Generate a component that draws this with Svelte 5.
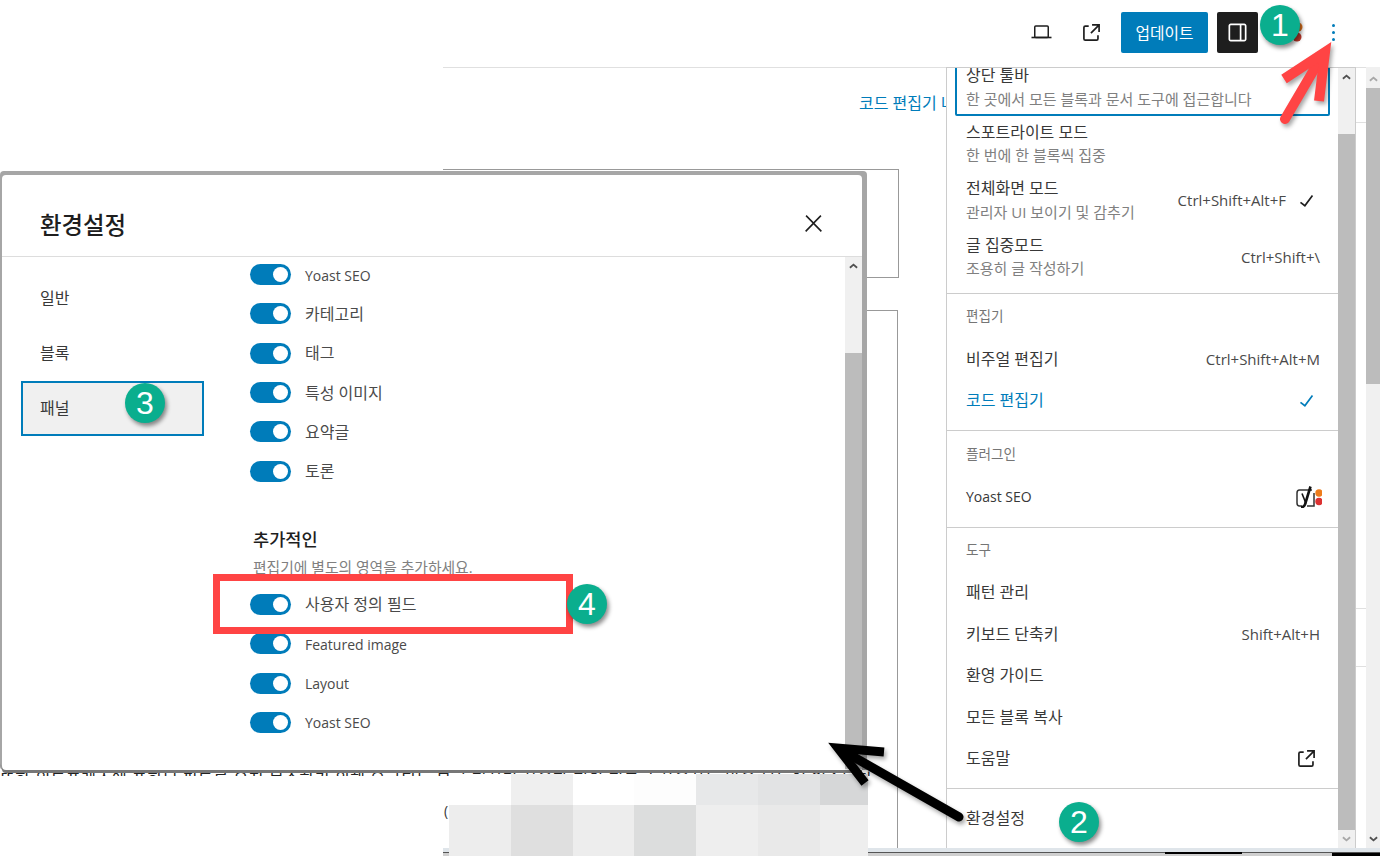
<script>
  const icons = {
    external: 'M19.5 4.5h-7V6h4.44l-5.97 5.97 1.06 1.06L18 7.06v4.44h1.5v-7Zm-13 1a2 2 0 0 0-2 2v10a2 2 0 0 0 2 2h10a2 2 0 0 0 2-2v-3H17v3a.5.5 0 0 1-.5.5h-10a.5.5 0 0 1-.5-.5v-10a.5.5 0 0 1 .5-.5h3V5.5h-3Z',
    sidebar: 'M18 4H6c-1.1 0-2 .9-2 2v12c0 1.1.9 2 2 2h12c1.1 0 2-.9 2-2V6c0-1.1-.9-2-2-2zm-4 14.5H6c-.3 0-.5-.2-.5-.5V6c0-.3.2-.5.5-.5h8v13zm4.5-.5c0 .3-.2.5-.5.5h-2.5v-13H18c.3 0 .5.2.5.5v12z',
    check: 'M16.7 7.1l-6.3 8.5-3.3-2.5-.9 1.2 4.5 3.4L17.9 8z',
    close: 'M13 11.8l6.1-6.3-1-1-6.1 6.2-6.1-6.2-1 1 6.1 6.3-6.5 6.7 1 1 6.5-6.6 6.5 6.6 1-1z'
  };

  const viewItems = [
    { label: '상단 툴바', desc: '한 곳에서 모든 블록과 문서 도구에 접근합니다', focused: true },
    { label: '스포트라이트 모드', desc: '한 번에 한 블록씩 집중' },
    { label: '전체화면 모드', desc: '관리자 UI 보이기 및 감추기', shortcut: 'Ctrl+Shift+Alt+F', check: true },
    { label: '글 집중모드', desc: '조용히 글 작성하기', shortcut: 'Ctrl+Shift+\\' }
  ];
  const toolItems = [
    { label: '패턴 관리' },
    { label: '키보드 단축키', shortcut: 'Shift+Alt+H' },
    { label: '환영 가이드' },
    { label: '모든 블록 복사' },
    { label: '도움말', external: true }
  ];

  const navItems = ['일반', '블록', '패널'];
  const panelsTop = ['Yoast SEO', '카테고리', '태그', '특성 이미지', '요약글', '토론'];
  const panelsExtra = ['사용자 정의 필드', 'Featured image', 'Layout', 'Yoast SEO'];

  // latin labels run smaller than hangul ones in the original font
  const isLatin = (s) => /^[\x00-\x7f]+$/.test(s);

  // blurred patch over the article text, left to right
  const mosaic = [
    '#ffffff', '#efefef', '#ffffff', '#fdfdfd', '#e7e8e9', '#e2e3e4', '#d6d7d8',
    '#ededed', '#dfdfdf', '#ededed', '#dcdddd', '#eeeeee', '#e9e9e9', '#eeeeee'
  ];

  const badges = [
    { n: 1, x: 1280, y: 25 },
    { n: 2, x: 1079, y: 822 },
    { n: 3, x: 145, y: 403 },
    { n: 4, x: 587, y: 604 }
  ];
</script>

{#snippet icon(d, cls = '')}
  <svg class="icon {cls}" viewBox="0 0 24 24" aria-hidden="true"><path d={d} /></svg>
{/snippet}

{#snippet scrollArrow(up)}
  <svg class="sb-arrow" viewBox="0 0 10 6" aria-hidden="true">
    <polyline points={up ? '1,5 5,1.5 9,5' : '1,1 5,4.5 9,1'} />
  </svg>
{/snippet}

{#snippet yoast()}
  <svg class="yoast" viewBox="0 0 26 22" aria-hidden="true">
    <path class="yoast-box" d="M16 4H3.5Q1 4 1 7v10q0 3 2.5 3H6M11 20h7V7" />
    <path class="yoast-y" d="M6 7.5l4 10" />
    <path class="yoast-y bold" d="M14.5 0.5l-5.5 18q-1 2.500-4 3" />
    <circle cx="23" cy="7" r="3.7" fill="#ee7c1b" />
    <circle cx="23" cy="15.500" r="3.7" fill="#dc3232" />
  </svg>
{/snippet}

{#snippet menuItem(item)}
  <div class="menu-item" class:focused={item.focused} class:active={item.active}>
    <div class="item-text">
      <div class="item-label" class:latin={isLatin(item.label)}>{item.label}</div>
      {#if item.desc}<div class="item-desc">{item.desc}</div>{/if}
    </div>
    {#if item.shortcut}<span class="shortcut">{item.shortcut}</span>{/if}
    {#if item.check}{@render icon(icons.check)}{/if}
    {#if item.external}{@render icon(icons.external)}{/if}
  </div>
{/snippet}

{#snippet toggleRow(label)}
  <div class="toggle-row">
    <span class="toggle"><span class="knob"></span></span>
    <span class="row-label" class:latin={isLatin(label)}>{label}</span>
  </div>
{/snippet}

<div class="page">
  <header class="toolbar">
    <button class="tool">
      <svg class="icon" viewBox="0 0 27 27" aria-hidden="true">
        <rect class="laptop" x="6.750" y="7" width="13.500" height="11.500" rx="1" />
        <rect x="3.500" y="17.700" width="20" height="1.600" />
      </svg>
    </button>
    <button class="tool">{@render icon(icons.external)}</button>
    <button class="update">업데이트</button>
    <button class="tool dark">{@render icon(icons.sidebar)}</button>
    <button class="tool yoast-tool">
      <svg class="yoast-dots" viewBox="0 0 10 20" aria-hidden="true">
        <circle cx="5" cy="5" r="4.500" fill="#e0731c" />
        <circle cx="4" cy="15" r="4.500" fill="#c0392b" />
      </svg>
    </button>
    <button class="kebab" aria-label="옵션"><i></i><i></i><i></i></button>
  </header>

  <div class="workspace">
    <div class="gutter"></div>
    <main class="editor">
      <div class="code-bar"><a href="#top">코드 편집기 나가기</a></div>
      <div class="code-box first"></div>
      <div class="code-box second">
        <p class="article-next">(</p>
      </div>
    </main>
    <aside class="side-strip"><i style="top: 54px"></i><i style="top: 540px"></i><i style="top: 598px"></i></aside>
    <div class="scrollbar page-sb">
      {@render scrollArrow(true)}
      <div class="thumb"></div>
      <div class="sb-fill"></div>
      {@render scrollArrow(false)}
    </div>
  </div>
  <div class="statusbar"></div>

  <!-- only the tops of this line show between the modal and the white patch -->
  <div class="article-peek">
    <p>또한 워드프레스에 포함된 필드를 유지 보수하기 위해 요구되는 블록 편집기 사용자 정의 필드를 사용하는 많은 분들이 있습니다</p>
  </div>

  <div class="menu">
    <div class="menu-scroll">
      <section class="menu-group first-group">
        {#each viewItems as item}{@render menuItem(item)}{/each}
      </section>
      <section class="menu-group">
        <h3>편집기</h3>
        {@render menuItem({ label: '비주얼 편집기', shortcut: 'Ctrl+Shift+Alt+M' })}
        {@render menuItem({ label: '코드 편집기', check: true, active: true })}
      </section>
      <section class="menu-group plugin-group">
        <h3>플러그인</h3>
        <div class="menu-item">
          <div class="item-text"><div class="item-label latin">Yoast SEO</div></div>
          {@render yoast()}
        </div>
      </section>
      <section class="menu-group">
        <h3>도구</h3>
        {#each toolItems as item}{@render menuItem(item)}{/each}
      </section>
      <section class="menu-group">
        {@render menuItem({ label: '환경설정' })}
      </section>
    </div>
    <div class="scrollbar menu-sb">
      {@render scrollArrow(true)}
      <div class="thumb"></div>
      {@render scrollArrow(false)}
    </div>
  </div>

  <div class="modal" role="dialog" aria-label="환경설정">
    <div class="modal-head">
      <h1>환경설정</h1>
      {@render icon(icons.close, 'close')}
    </div>
    <div class="modal-body">
      <nav class="modal-nav">
        {#each navItems as item, i}
          <div class="nav-item" class:selected={i === 2}>{item}</div>
        {/each}
      </nav>
      <div class="modal-content">
        <div class="panel-list">
          {#each panelsTop as label}{@render toggleRow(label)}{/each}
        </div>
        <h2>추가적인</h2>
        <p class="section-desc">편집기에 별도의 영역을 추가하세요.</p>
        <div class="panel-list">
          {#each panelsExtra as label}{@render toggleRow(label)}{/each}
        </div>
      </div>
      <div class="scrollbar modal-sb">
        {@render scrollArrow(true)}
        <div class="thumb"></div>
      </div>
    </div>
  </div>

  <div class="mosaic">
    {#each mosaic as color}<span style="background: {color}"></span>{/each}
  </div>

  <!-- screenshot annotations -->
  <div class="highlight"></div>

  <svg class="arrows" viewBox="0 0 1380 856" aria-hidden="true">
    <g class="arrow red">
      <path d="M1285 119L1322 56" />
      <path class="head" d="M1284 79L1325 52L1319 101" />
    </g>
    <g class="arrow black">
      <path d="M959 817L845 752" />
      <path class="head" d="M884 752L838 748L865 783" />
    </g>
  </svg>

  {#each badges as b}
    <span class="badge" style="left: {b.x - 20}px; top: {b.y - 20}px">{b.n}</span>
  {/each}
</div>

<style>
  :global(body) {
    margin: 0;
    background: #fff;
  }

  .page {
    position: relative;
    display: flex;
    flex-direction: column;
    width: 1380px;
    height: 856px;
    overflow: hidden;
    background: #fff;
    color: #383838;
    font-family: "Open Sans", "Noto Sans CJK KR", sans-serif;
    font-size: 16px;
  }

  .latin {
    font-size: 14px;
  }

  button {
    padding: 0;
    border: 0;
    background: none;
    font: inherit;
    color: inherit;
  }

  .icon {
    display: block;
    flex: none;
    width: 27px;
    height: 27px;
    fill: #1e1e1e;
  }

  /* Top toolbar */

  .toolbar {
    display: flex;
    flex: none;
    align-items: center;
    justify-content: flex-end;
    gap: 9px;
    height: 67px;
    padding: 0 31px 2px 0;
    box-sizing: border-box;
  }

  .tool {
    display: flex;
    align-items: center;
    justify-content: center;
    width: 41px;
    height: 41px;
    border-radius: 2px;
  }

  .tool.dark {
    background: #1e1e1e;
  }

  .tool.dark .icon {
    fill: #fff;
  }

  .laptop {
    fill: none;
    stroke: #1e1e1e;
    stroke-width: 1.5;
  }

  .update {
    width: 87px;
    height: 41px;
    border-radius: 2px;
    background: #007cba;
    color: #fff;
    font-size: 15.8px;
  }

  .yoast-tool {
    justify-content: flex-end;
    padding: 0 5px 2px 0;
    box-sizing: border-box;
  }

  .yoast-dots {
    width: 10px;
    height: 20px;
  }

  .kebab {
    display: flex;
    flex-direction: column;
    align-items: center;
    gap: 4px;
    width: 32px;
  }

  .kebab i {
    width: 3px;
    height: 3px;
    border-radius: 50%;
    background: #007cba;
  }

  /* Editor behind the popups */

  .workspace {
    display: flex;
    flex: 1;
    min-height: 0;
  }

  .gutter {
    width: 443px;
    flex: none;
  }

  .editor {
    flex: 1;
    border-top: 1px solid #e0e0e0;
    min-width: 0;
  }

  .code-bar {
    display: flex;
    align-items: center;
    height: 67px;
    padding-left: 416px;
    white-space: nowrap;
    overflow: hidden;
  }

  .code-bar a {
    color: #007cba;
    text-decoration: none;
  }

  .code-box {
    width: 455px;
    border: 1px solid #999;
    border-left: 0;
  }

  .code-box.first {
    height: 107px;
    margin-top: 34px;
  }

  .code-box.second {
    height: 538px;
    margin-top: 32px;
    border-bottom: 0;
    padding-top: 490px;
    box-sizing: border-box;
  }

  .article-next {
    margin: 0;
    padding-left: 1px;
    font-size: 14px;
  }

  .article-peek {
    position: absolute;
    left: 0;
    top: 770px;
    width: 870px;
    height: 6px;
    overflow: hidden;
  }

  .article-peek p {
    margin: -3px 0 0;
    font-size: 16px;
    line-height: 24px;
    white-space: nowrap;
    letter-spacing: 0.6px;
    color: #222;
  }

  .side-strip {
    position: relative;
    width: 11px;
    flex: none;
    margin-left: auto;
    border-top: 1px solid #e0e0e0;
  }

  .side-strip i {
    position: absolute;
    left: 0;
    right: 0;
    height: 1px;
    background: #e0e0e0;
  }

  .statusbar {
    flex: none;
    height: 8px;
    margin-left: 443px;
    background:
      linear-gradient(#000, #000) 889px 5px / 48px 3px no-repeat,
      linear-gradient(#000, #000) 722px 4px / 77px 2px no-repeat,
      linear-gradient(#dfe5ea 0 4px, #555 4px 5px, #cfcfcf 5px);
  }

  /* Scrollbars */

  .scrollbar {
    display: flex;
    flex-direction: column;
    align-items: center;
    flex: none;
    background: #f0f0f0;
    box-sizing: border-box;
  }

  .thumb {
    flex: 1;
    align-self: stretch;
    background: #bcbcbc;
  }

  .sb-arrow {
    flex: none;
    width: 9px;
    height: 6px;
    margin: 6px 0;
    fill: none;
    stroke: #505050;
    stroke-width: 2;
  }

  .page-sb {
    width: 14px;
    padding-top: 3px;
  }

  .page-sb .sb-arrow:first-child {
    stroke: #a8a8a8;
  }

  .page-sb .thumb {
    flex: none;
    height: 296px;
  }

  .sb-fill {
    flex: 1;
  }

  /* Options menu */

  .menu {
    position: absolute;
    left: 946px;
    top: 67px;
    display: flex;
    width: 410px;
    height: 781px;
    box-sizing: border-box;
    border: 1px solid #ccc;
    border-bottom: 0;
    background: #fff;
  }

  .menu-scroll {
    flex: 1;
    min-width: 0;
    overflow: hidden;
  }

  .menu-group {
    padding: 9px 8px 8px;
    border-bottom: 1px solid #ccc;
  }

  .first-group {
    margin-top: -9px;
    padding-top: 0;
  }

  .plugin-group {
    padding-top: 10px;
  }

  .menu-group:last-child {
    border-bottom: 0;
    padding-top: 9px;
  }

  .menu-group h3 {
    margin: 0;
    padding: 2px 11px 0;
    height: 36px;
    box-sizing: border-box;
    font-size: 13.6px;
    font-weight: 400;
    line-height: 22px;
    color: #757575;
  }

  .menu-item {
    display: flex;
    align-items: center;
    gap: 7px;
    min-height: 41.5px;
    padding: 0 10px 2px 11px;
    box-sizing: border-box;
    line-height: 24.5px;
  }

  .menu-item .item-text {
    flex: 1;
    min-width: 0;
  }

  .menu-item:has(.item-desc) {
    min-height: 56.5px;
    padding-bottom: 0;
  }

  .menu-item.focused {
    border: 2px solid #007cba;
    border-radius: 2px;
    padding: 0 8px 0 9px;
  }

  .menu-item.active,
  .menu-item.active .item-label {
    color: #007cba;
  }

  .menu-item.active .icon {
    fill: #007cba;
  }

  .item-desc {
    margin-top: -1px;
    font-size: 15px;
    color: #808080;
  }

  .shortcut {
    color: #4a4a4a;
    font-size: 15px;
  }

  .yoast {
    display: block;
    width: 26px;
    height: 22px;
    margin-right: -2px;
  }

  .yoast-box {
    fill: none;
    stroke: #333;
    stroke-width: 1.5;
  }

  .yoast-y {
    fill: none;
    stroke: #111;
    stroke-width: 1.6;
  }

  .yoast-y.bold {
    stroke-width: 2.6;
  }

  .menu-sb {
    width: 17px;
  }

  .menu-sb .thumb {
    margin-top: 48px;
  }

  .menu-sb .sb-arrow:last-child {
    stroke: #a8a8a8;
  }

  /* Preferences modal */

  .modal {
    position: absolute;
    left: 2px;
    top: 175px;
    display: flex;
    flex-direction: column;
    width: 860px;
    height: 595px;
    border-radius: 4px 4px 0 4px;
    background: #fff;
    box-shadow:
      5px -4px 0 #a6a6a6,
      0 -4px 0 #a6a6a6,
      -2px -4px 0 #a6a6a6,
      5px 0 0 #969696,
      0 3px 0 #777,
      -2px 0 0 #999;
  }

  .modal-head {
    display: flex;
    align-items: center;
    justify-content: space-between;
    flex: none;
    height: 82px;
    padding: 0 35px 0 38px;
    box-sizing: border-box;
    border-bottom: 1px solid #ddd;
  }

  .modal-head h1 {
    margin: 0;
    padding-top: 16px;
    font-size: 23.4px;
    font-weight: 500;
    color: #1e1e1e;
  }

  .modal-head .close {
    margin-top: 16px;
  }

  .modal-body {
    display: flex;
    flex: 1;
    min-height: 0;
  }

  .modal-nav {
    flex: none;
    display: flex;
    flex-direction: column;
    width: 183px;
    margin: 0 46px 0 19px;
    padding-top: 14px;
  }

  .nav-item {
    display: flex;
    align-items: center;
    height: 55px;
    padding: 0 0 4px 19px;
    box-sizing: border-box;
  }

  .nav-item.selected {
    padding-left: 17px;
    border: 2px solid #007cba;
    background: #f0f0f0;
  }

  .modal-content {
    flex: 1;
    min-width: 0;
    margin-top: -2px;
  }

  .toggle-row {
    display: flex;
    align-items: center;
    gap: 14px;
    height: 39.3px;
    color: #4a4a4a;
  }

  .row-label {
    padding-bottom: 2px;
  }

  .row-label.latin {
    padding: 1px 0 0;
  }

  .toggle {
    display: flex;
    align-items: center;
    justify-content: flex-end;
    width: 41px;
    height: 21px;
    padding-right: 3px;
    box-sizing: border-box;
    border-radius: 11px;
    background: #007cba;
  }

  .knob {
    width: 15px;
    height: 15px;
    border-radius: 50%;
    background: #fff;
  }

  .modal-content h2 {
    margin: 36px 0 0 3px;
    font-size: 17.6px;
    font-weight: 500;
    line-height: 24px;
    color: #1e1e1e;
  }

  .section-desc {
    margin: 5px 0 7px 3px;
    font-size: 14.8px;
    line-height: 22px;
    color: #808080;
  }

  .modal-sb {
    width: 17px;
  }

  .modal-sb .thumb {
    flex: none;
    height: 416px;
    margin-top: 78px;
  }

  /* Blurred patch and annotations */

  .mosaic {
    position: absolute;
    left: 449px;
    top: 774px;
    display: grid;
    grid-template-columns: 62px 62px 61px 62px 62px 62px 48px;
    grid-template-rows: 31px 51px;
    width: 419px;
  }

  .highlight {
    position: absolute;
    left: 213px;
    top: 574px;
    width: 360px;
    height: 60px;
    box-sizing: border-box;
    border: 7px solid #ff4444;
  }

  .arrows {
    position: absolute;
    inset: 0;
    width: 1380px;
    height: 856px;
    pointer-events: none;
  }

  .arrow {
    fill: none;
    stroke-linecap: round;
    filter: drop-shadow(2px 3px 2px rgba(0, 0, 0, 0.35));
  }

  .arrow .head {
    stroke-linecap: butt;
    stroke-linejoin: miter;
  }

  .arrow.red {
    stroke: #ff4444;
    stroke-width: 10;
  }

  .arrow.black {
    stroke: #000;
    stroke-width: 9;
  }

  .badge {
    position: absolute;
    display: flex;
    align-items: center;
    justify-content: center;
    width: 40px;
    height: 40px;
    border-radius: 50%;
    background: #0aae8e;
    color: #fff;
    font-family: "Liberation Sans", sans-serif;
    font-size: 32px;
    box-shadow: 2px 3px 4px rgba(0, 0, 0, 0.45);
  }
</style>
